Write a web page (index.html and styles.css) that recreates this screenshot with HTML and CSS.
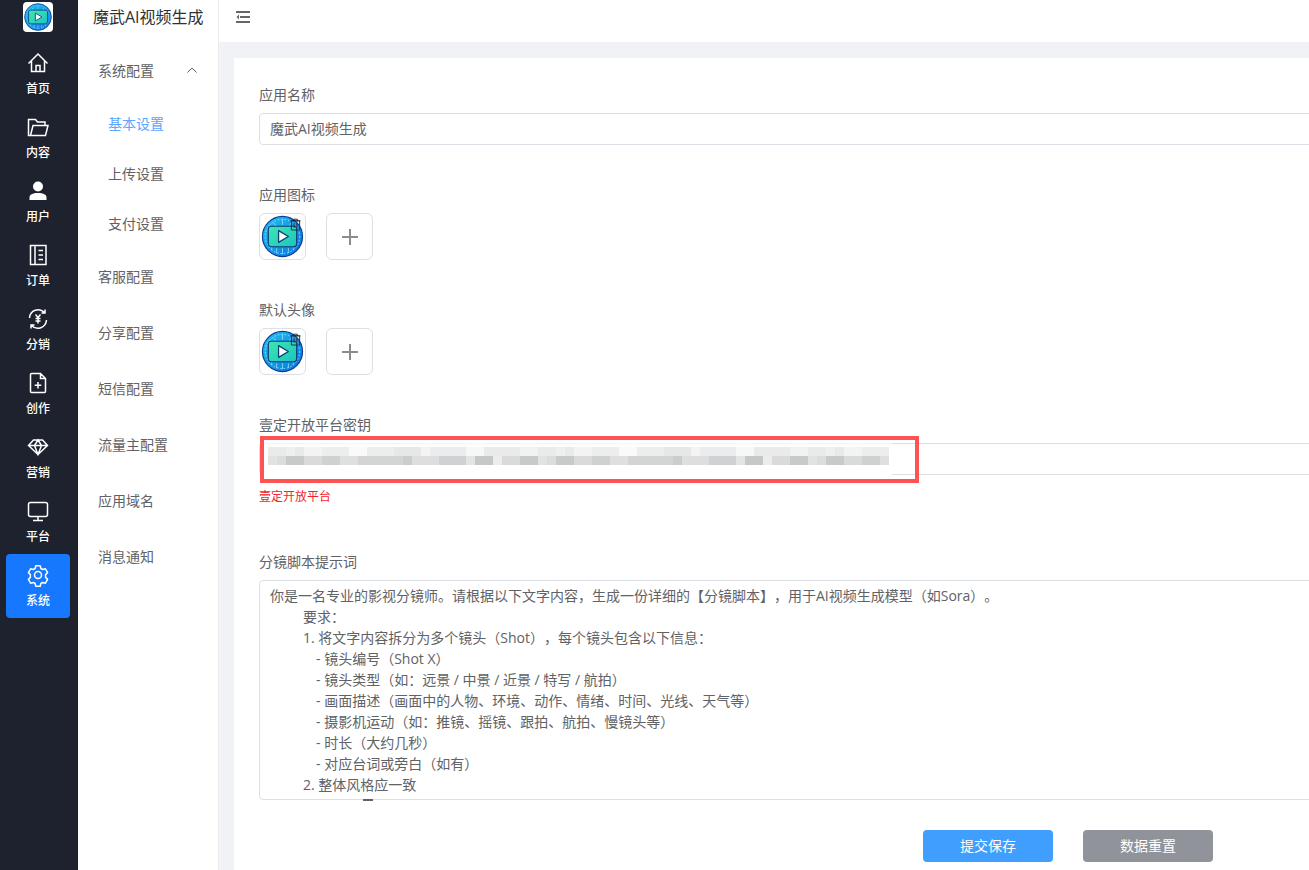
FILE: index.html
```html
<!DOCTYPE html>
<html lang="zh-CN">
<head>
<meta charset="utf-8">
<title>魔武AI视频生成</title>
<link rel="stylesheet" href="styles.css">
</head>
<body>
<svg class="defs" width="0" height="0" aria-hidden="true">
  <defs>
    <linearGradient id="lg-ring" x1="0" y1="0" x2="1" y2="1"><stop offset="0" stop-color="#22c3f2"/><stop offset="1" stop-color="#0f6fdc"/></linearGradient>
    <linearGradient id="lg-screen" x1="0" y1="0" x2="1" y2="1"><stop offset="0" stop-color="#3fe6b0"/><stop offset="1" stop-color="#1cc4c0"/></linearGradient>
    <symbol id="logo" viewBox="0 0 46 46">
      <circle cx="23" cy="23" r="20.500" fill="url(#lg-ring)"/>
      <circle cx="23" cy="23" r="20.500" fill="none" stroke="#0a3f96" stroke-width="1.200"/>
      <circle cx="23" cy="23" r="17.500" fill="none" stroke="#8be8fb" stroke-width="1" stroke-dasharray="1.500 2"/>
      <path d="M12 37v-3M17 40v-5M23 41v-6M29 40v-5M34 37v-3M14 9l2 3M23 5v6M32 9l-2 3" fill="none" stroke="#8be8fb" stroke-width=".8"/>
      <rect x="8.500" y="12.500" width="29" height="21" rx="3" fill="url(#lg-screen)" stroke="#0b3f78" stroke-width="1.200"/>
      <path d="M19 17v12l10-6z" fill="#fff" stroke="#0b3f78" stroke-width="1.300" stroke-linejoin="round"/>
    </symbol>
  </defs>
</svg>
<div class="app">
  <nav class="rail">
    <div class="rail-logo"><svg class="rail-logo-img"><use href="#logo"/></svg></div>
    <a class="rail-item">
      <svg class="rail-icon" viewBox="0 0 24 24"><path d="M2.500 12.500 12 3l9.500 9.500M5.500 10v10.500h13V10M10 20.500v-6h4v6"/></svg>
      <span>首页</span>
    </a>
    <a class="rail-item">
      <svg class="rail-icon" viewBox="0 0 24 24"><path d="M4.500 20.500H2.500V4.500h7l2 2.500h7.500v3.500M4.500 20.500l2.500-10h15l-2.500 10z"/></svg>
      <span>内容</span>
    </a>
    <a class="rail-item">
      <svg class="rail-icon" viewBox="0 0 24 24"><circle class="solid" cx="12" cy="7.500" r="5"/><path class="solid" d="M3.500 21v-2.500c0-3 3-4.500 8.500-4.500s8.500 1.500 8.500 4.500V21z"/></svg>
      <span>用户</span>
    </a>
    <a class="rail-item">
      <svg class="rail-icon" viewBox="0 0 24 24"><path d="M4.500 2.500h15.500v19H4.500zM9 2.500v19M12.500 7.500h4.500M12.500 12h4.500M12.500 16.500h4.500"/></svg>
      <span>订单</span>
    </a>
    <a class="rail-item">
      <svg class="rail-icon" viewBox="0 0 24 24"><path d="M3.500 11A8.700 8.700 0 0 1 18.500 5.500M20.500 13A8.700 8.700 0 0 1 5.500 18.500M19 2.500v3.500h-3.500M5 21.500V18h3.500M9.500 7.500 12 10.500l2.500-3M12 10.500v6M9.500 11.500h5M9.500 14h5"/></svg>
      <span>分销</span>
    </a>
    <a class="rail-item">
      <svg class="rail-icon" viewBox="0 0 24 24"><path d="M14.500 2.500H5.500a1 1 0 0 0-1 1v17a1 1 0 0 0 1 1h13a1 1 0 0 0 1-1V7.500zM14.500 2.500v5h5M12 11v6.500M8.700 14.200h6.600"/></svg>
      <span>创作</span>
    </a>
    <a class="rail-item">
      <svg class="rail-icon" viewBox="0 0 24 24"><path d="M7.500 5h9l5 5.500-9.500 9-9.500-9zM2.500 10.500h19M8.500 10.500 12 19.500l3.500-9M8.500 10.500 12 5l3.500 5.500"/></svg>
      <span>营销</span>
    </a>
    <a class="rail-item">
      <svg class="rail-icon" viewBox="0 0 24 24"><rect x="2.500" y="3.500" width="19" height="14" rx="2"/><path d="M12 17.500v4M7 21.500h10"/></svg>
      <span>平台</span>
    </a>
    <a class="rail-item is-active">
      <svg class="rail-icon" viewBox="0 0 24 24"><circle cx="12" cy="12" r="3.500"/><path d="M9.800 2.800h4.400l.7 2.700 1.800 1 2.700-.7 2.200 3.800-2 2v2.800l2 2-2.200 3.800-2.700-.7-1.800 1-.7 2.700H9.800l-.7-2.700-1.800-1-2.700.7-2.200-3.800 2-2v-2.800l-2-2 2.200-3.800 2.700.7 1.800-1z" stroke-linejoin="round"/></svg>
      <span>系统</span>
    </a>
  </nav>

  <aside class="side">
    <div class="side-title">魔武AI视频生成</div>
    <div class="menu-head">
      <span>系统配置</span>
      <svg class="chevron" viewBox="0 0 12 8"><path d="M1.500 6.500 6 2l4.500 4.500"/></svg>
    </div>
    <a class="sub-item is-current">基本设置</a>
    <a class="sub-item">上传设置</a>
    <a class="sub-item">支付设置</a>
    <a class="menu-item">客服配置</a>
    <a class="menu-item">分享配置</a>
    <a class="menu-item">短信配置</a>
    <a class="menu-item">流量主配置</a>
    <a class="menu-item">应用域名</a>
    <a class="menu-item">消息通知</a>
  </aside>

  <div class="content">
    <header class="topbar">
      <svg class="fold" viewBox="0 0 14 12"><path d="M0 1h14M4 6h10M0 11h14"/><path class="solid" d="M3 3.500v5L0.500 6z"/></svg>
    </header>
    <main class="card">
      <form class="form">
        <div class="field">
          <label class="label">应用名称</label>
          <div class="input">魔武AI视频生成</div>
        </div>
        <div class="field">
          <label class="label">应用图标</label>
          <div class="uploads">
            <div class="thumb">
              <svg class="thumb-img"><use href="#logo"/></svg>
              <svg class="trash" viewBox="0 0 12 13"><path d="M.500 2.500h11M4 2.500V.700h4v1.800M1.500 2.500h9v10h-9zM4.500 5v5M7.500 5v5"/></svg>
            </div>
            <div class="add"><svg class="plus" viewBox="0 0 18 18"><path d="M9 1v16M1 9h16"/></svg></div>
          </div>
        </div>
        <div class="field">
          <label class="label">默认头像</label>
          <div class="uploads">
            <div class="thumb">
              <svg class="thumb-img"><use href="#logo"/></svg>
              <svg class="trash" viewBox="0 0 12 13"><path d="M.500 2.500h11M4 2.500V.700h4v1.800M1.500 2.500h9v10h-9zM4.500 5v5M7.500 5v5"/></svg>
            </div>
            <div class="add"><svg class="plus" viewBox="0 0 18 18"><path d="M9 1v16M1 9h16"/></svg></div>
          </div>
        </div>
        <div class="field field-key">
          <label class="label">壹定开放平台密钥</label>
          <div class="input input-key">
            <div class="smear"></div>
            <div class="mosaic"></div>
            <div class="redbox"></div>
          </div>
          <div class="help">壹定开放平台</div>
        </div>
        <div class="field field-script">
          <label class="label">分镜脚本提示词</label>
          <div class="textarea"><div class="ta-line">你是一名专业的影视分镜师。请根据以下文字内容，生成一份详细的【分镜脚本】，用于AI视频生成模型（如Sora）。</div><div class="ta-line in-1">要求：</div><div class="ta-line in-2">1. 将文字内容拆分为多个镜头（Shot），每个镜头包含以下信息：</div><div class="ta-line in-3">- 镜头编号（Shot X）</div><div class="ta-line in-3">- 镜头类型（如：远景 / 中景 / 近景 / 特写 / 航拍）</div><div class="ta-line in-3">- 画面描述（画面中的人物、环境、动作、情绪、时间、光线、天气等）</div><div class="ta-line in-3">- 摄影机运动（如：推镜、摇镜、跟拍、航拍、慢镜头等）</div><div class="ta-line in-3">- 时长（大约几秒）</div><div class="ta-line in-3">- 对应台词或旁白（如有）</div><div class="ta-line in-2">2. 整体风格应一致</div></div>
        </div>
        <div class="actions">
          <button type="button" class="btn btn-primary">提交保存</button>
          <button type="button" class="btn btn-grey">数据重置</button>
        </div>
      </form>
    </main>
  </div>
</div>
</body>
</html>
```

FILE: styles.css
```css
* { box-sizing: border-box; }
html, body { margin: 0; height: 100%; overflow: hidden; }
body { font-family: "Open Sans", "Noto Sans CJK SC", sans-serif; font-size: 14px; color: #606266; background: #f0f2f5; text-spacing-trim: space-all; }
.defs { position: absolute; }

.app { display: flex; width: 1309px; height: 870px; overflow: hidden; }

/* icon rail */
.rail { flex: 0 0 78px; background: #1d222e; display: flex; flex-direction: column; padding-left: 6px; }
.rail-logo { height: 42px; width: 64px; display: flex; justify-content: center; padding-top: 2px; }
.rail-logo-img { width: 30px; height: 30px; background: #fff; border-radius: 4px; }
.rail-item { width: 64px; height: 64px; flex: none; border-radius: 4px; display: flex; flex-direction: column; align-items: center; color: #fff; font-size: 12px; line-height: 16px; font-weight: 500; padding-top: 9px; }
.rail-item.is-active { background: #1677ff; }
.rail-icon { width: 24px; height: 24px; margin-bottom: 6px; fill: none; stroke: #fff; stroke-width: 1.500; }
.rail-icon .solid { fill: #fff; stroke: none; }

/* second sidebar */
.side { flex: 0 0 141px; background: #fff; border-right: 1px solid #ececec; }
.side-title { height: 43px; padding: 5px 0 0 15px; font-size: 16px; line-height: 24px; color: #303133; white-space: nowrap; }
.menu-head, .menu-item { height: 56px; display: flex; align-items: center; padding: 0 0 2px 20px; color: #606266; }
.menu-head { justify-content: space-between; padding-right: 20px; }
.chevron { width: 12px; height: 8px; fill: none; stroke: #606266; stroke-width: 1; margin-top: -1px; }
.sub-item { height: 50px; display: flex; align-items: center; padding: 0 0 2px 30px; color: #606266; }
.sub-item.is-current { color: #5aa5ff; }

/* right column */
.content { flex: 1; min-width: 0; display: flex; flex-direction: column; }
.topbar { flex: 0 0 42px; background: #fff; padding: 11px 0 0 17px; }
.fold { display: block; width: 14px; height: 12px; fill: none; stroke: #666; stroke-width: 2; }
.fold .solid { fill: #666; stroke: none; }
.card { flex: 1; margin: 16px 0 0 15px; background: #fff; padding: 26px 0 0 25px; min-height: 0; overflow: hidden; }
.form { width: 1618px; }

.field { margin-bottom: 39px; }
.label { display: block; line-height: 22px; margin-bottom: 7px; color: #606266; }
.input { height: 32px; border: 1px solid #dcdfe6; border-radius: 4px; padding: 0 10px; line-height: 30px; color: #606266; }
.uploads { display: flex; gap: 20px; }
.thumb, .add { width: 47px; height: 47px; border: 1px solid #dcdfe6; border-radius: 6px; position: relative; display: flex; align-items: center; justify-content: center; }
.thumb-img { width: 45px; height: 45px; }
.trash { position: absolute; top: 4px; right: 4px; width: 11px; height: 13px; fill: none; stroke: #1f2733; stroke-width: 1; }
.plus { width: 18px; height: 18px; fill: none; stroke: #8c8c8c; stroke-width: 2; }

.field-key { margin-bottom: 44px; }
.input-key { position: relative; }
.smear { position: absolute; left: 2px; top: -2px; width: 630px; height: 34px; background: linear-gradient(180deg, #fff 0, rgba(255,255,255,.6) 2px, #fff 4px, #fff 100%); }
.mosaic { position: absolute; left: 8px; top: 3px; width: 621px; height: 18px;
  background:
    repeating-linear-gradient(90deg, #e9ebeb 0 18px, #eef0f0 18px 27px, #e8eaea 27px 36px, #f2f3f3 36px 54px, #eceeee 54px 81px, #fafafa 81px 99px, #eceded 99px 126px, #e6e8e8 126px 153px, #f3f4f4 153px 162px, #ebeced 162px 198px, #f6f7f7 198px 216px, #e9ebeb 216px 252px, #f1f2f2 252px 270px) 0 0 / 100% 9px no-repeat,
    repeating-linear-gradient(90deg, #e2e2e2 0 9px, #dcdcdc 9px 18px, #c8c9ca 18px 36px, #dadada 36px 54px, #cfd0d1 54px 72px, #dfdfdf 72px 90px, #d3d4d4 90px 135px, #cbcccd 135px 144px, #dedede 144px 171px, #d0d1d2 171px 198px, #e4e4e4 198px 207px, #c6c7c8 207px 225px, #ececec 225px 234px, #dadada 234px 252px, #c8c9ca 252px 270px) 0 9px / 100% 9px no-repeat;
}
.redbox { position: absolute; left: 0; top: -8px; width: 659px; height: 47px; border: 4px solid #ff5252; pointer-events: none; }
.help { margin-top: 12px; font-size: 12px; line-height: 20px; color: #f5222d; height: 20px; }

.textarea { position: relative; height: 220px; border: 1px solid #dcdfe6; border-radius: 4px; padding: 4px 10px 0; line-height: 21px; color: #606266; overflow: hidden; white-space: nowrap; }
.in-1 { padding-left: 33px; }
.in-2 { padding-left: 33px; }
.in-3 { padding-left: 46px; }
.field-script { position: relative; margin-bottom: 30px; }
.field-script::after { content: ""; position: absolute; left: 104px; bottom: -1px; width: 10px; height: 2px; background: #606266; }

.actions { display: flex; justify-content: center; gap: 30px; }
.btn { width: 130px; height: 32px; border: 0; border-radius: 4px; color: #fff; font: inherit; padding: 0 0 2px; }
.btn-primary { background: #409eff; }
.btn-grey { background: #909399; }
```
